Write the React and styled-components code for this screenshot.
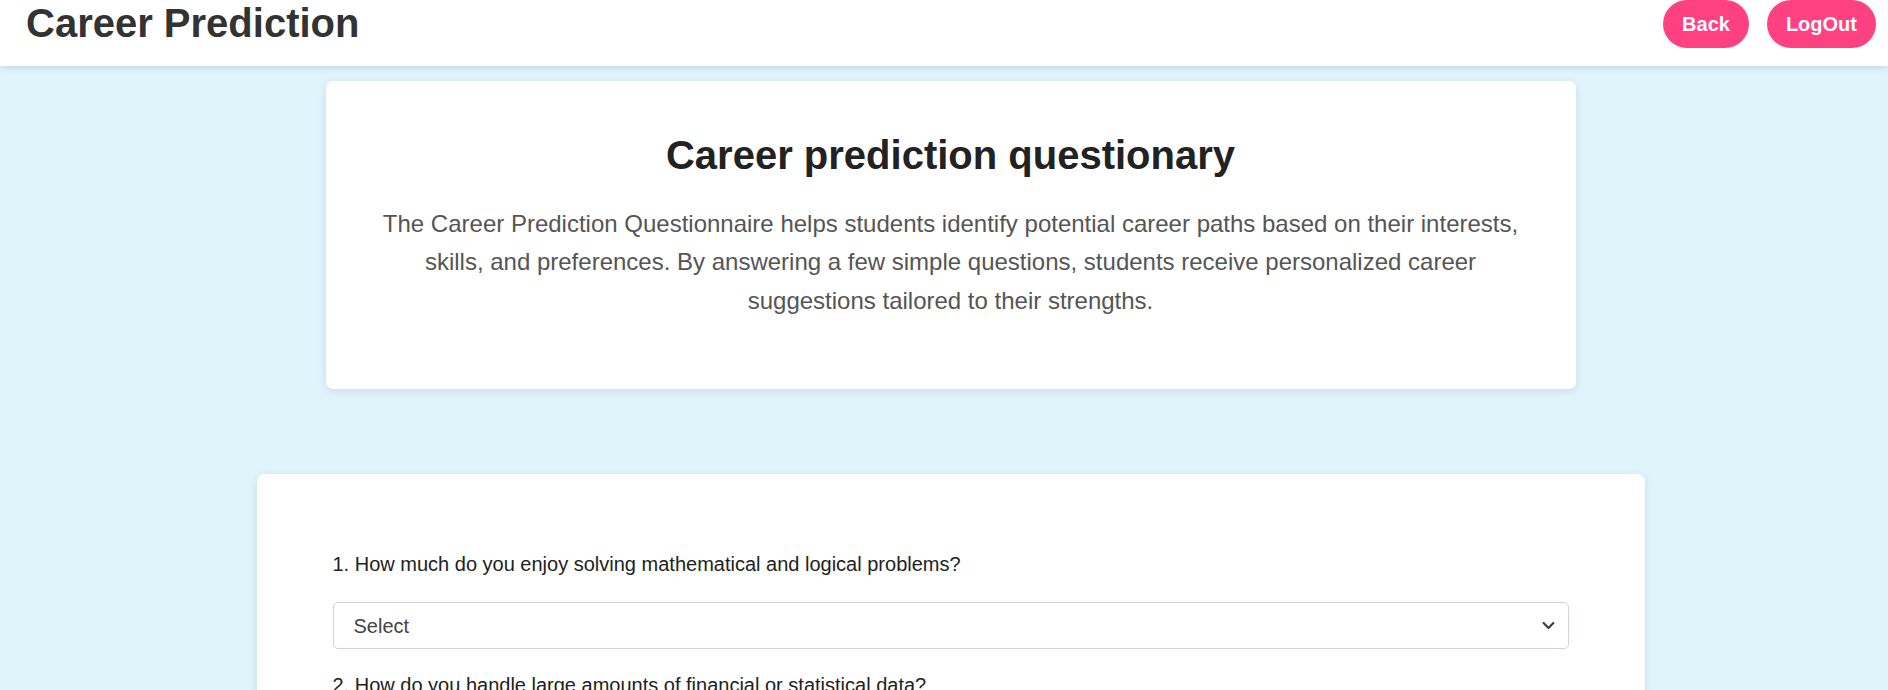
import React from "react";
import styled, { createGlobalStyle } from "styled-components";

const GlobalStyle = createGlobalStyle`
  * { box-sizing: border-box; }
  body {
    margin: 0;
    background-color: #e0f4fc;
    font-family: "Liberation Sans", Arial, Helvetica, sans-serif;
    overflow: hidden;
  }
`;

const Header = styled.header`
  height: 66px;
  background: #ffffff;
  display: flex;
  justify-content: space-between;
  align-items: flex-start;
  padding: 0 12px 0 26px;
  box-shadow: 0 2px 6px rgba(0, 0, 0, 0.12);
  position: relative;
  z-index: 1;
`;

const Brand = styled.h1`
  margin: 0;
  font-size: 40px;
  line-height: 46px;
  font-weight: 700;
  color: #333333;
`;

const Actions = styled.div`
  display: flex;
  gap: 18px;
`;

const PillButton = styled.button`
  height: 48px;
  padding: 0 19px;
  border: none;
  border-radius: 24px;
  background-color: #ff4081;
  color: #ffffff;
  font-family: inherit;
  font-size: 20px;
  font-weight: 700;
  cursor: pointer;

  &:hover {
    background-color: #f50057;
  }
`;

const Main = styled.main`
  display: flex;
  flex-direction: column;
  align-items: center;
  padding-top: 15px;
  padding-left: 13px;
`;

const IntroCard = styled.section`
  width: 1250px;
  padding: 51px 40px 69px;
  background: #ffffff;
  border-radius: 7px;
  box-shadow: 0 2px 8px rgba(0, 0, 0, 0.1);
  text-align: center;
`;

const Title = styled.h2`
  margin: 0 0 27px;
  font-size: 40px;
  line-height: 46px;
  font-weight: 700;
  color: #222222;
`;

const Lead = styled.p`
  margin: 0;
  font-size: 24px;
  line-height: 38.4px;
  color: #555555;
`;

const FormCard = styled.section`
  width: 1388px;
  margin-top: 85px;
  padding: 79px 76px 40px;
  background: #ffffff;
  border-radius: 8px;
  box-shadow: 0 2px 8px rgba(0, 0, 0, 0.1);
`;

const Question = styled.label`
  display: block;
  margin-bottom: 26px;
  font-size: 20px;
  line-height: 23px;
  color: #222222;
`;

const chevron =
  "data:image/svg+xml,%3csvg xmlns='http://www.w3.org/2000/svg' viewBox='0 0 16 16'%3e%3cpath fill='none' stroke='%23343a40' stroke-linecap='round' stroke-linejoin='round' stroke-width='2.6' d='m2 5 6 6 6-6'/%3e%3c/svg%3e";

const Select = styled.select`
  display: block;
  width: 100%;
  height: 47px;
  margin-bottom: 25px;
  padding: 0 40px 0 20px;
  font-family: inherit;
  font-size: 20px;
  color: #444444;
  background-color: #ffffff;
  background-image: url("${chevron}");
  background-repeat: no-repeat;
  background-position: right 12px center;
  background-size: 15px 13px;
  border: 1px solid #ced4da;
  border-radius: 5px;
  appearance: none;
`;

const questions = [
  "1. How much do you enjoy solving mathematical and logical problems?",
  "2. How do you handle large amounts of financial or statistical data?",
];

const App = () => {
  return (
    <>
      <GlobalStyle />
      <Header>
        <Brand>Career Prediction</Brand>
        <Actions>
          <PillButton>Back</PillButton>
          <PillButton>LogOut</PillButton>
        </Actions>
      </Header>
      <Main>
        <IntroCard>
          <Title>Career prediction questionary</Title>
          <Lead>
            The Career Prediction Questionnaire helps students identify potential career paths
            based on their interests, skills, and preferences. By answering a few simple
            questions, students receive personalized career suggestions tailored to their
            strengths.
          </Lead>
        </IntroCard>
        <FormCard>
          {questions.map((q, i) => (
            <div key={i}>
              <Question htmlFor={"q" + i}>{q}</Question>
              <Select id={"q" + i} defaultValue="">
                <option value="">Select</option>
                <option value="1">Very much</option>
                <option value="2">Somewhat</option>
                <option value="3">Not at all</option>
              </Select>
            </div>
          ))}
        </FormCard>
      </Main>
    </>
  );
};

export default App;
